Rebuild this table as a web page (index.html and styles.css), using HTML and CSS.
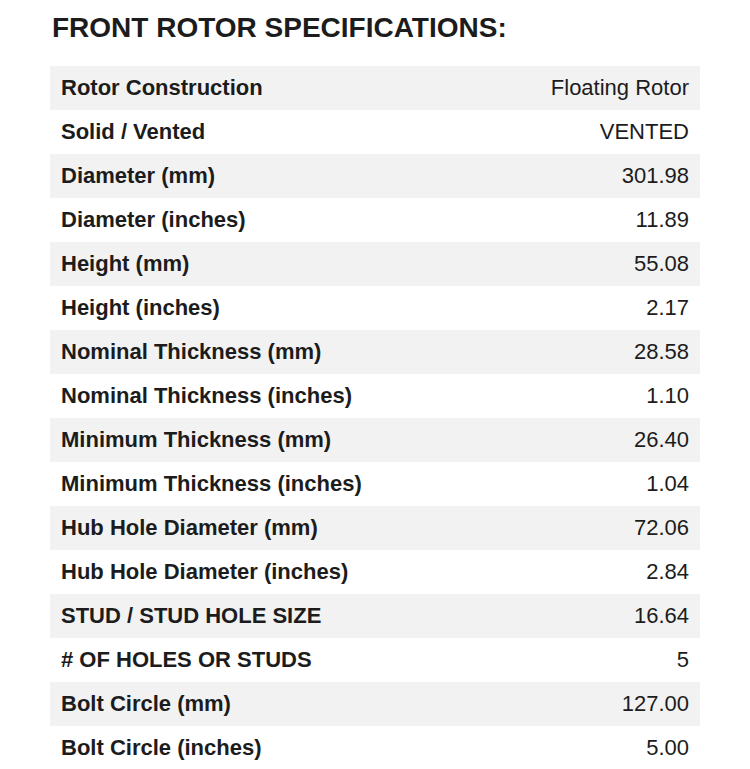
FILE: index.html
```html
<!DOCTYPE html>
<html>
<head>
<meta charset="utf-8">
<link rel="stylesheet" href="styles.css">
</head>
<body>
<div class="wrap">
  <h1 class="title">FRONT ROTOR SPECIFICATIONS:</h1>
  <table class="specs">
    <tr><th>Rotor Construction</th><td>Floating Rotor</td></tr>
    <tr><th>Solid / Vented</th><td>VENTED</td></tr>
    <tr><th>Diameter (mm)</th><td>301.98</td></tr>
    <tr><th>Diameter (inches)</th><td>11.89</td></tr>
    <tr><th>Height (mm)</th><td>55.08</td></tr>
    <tr><th>Height (inches)</th><td>2.17</td></tr>
    <tr><th>Nominal Thickness (mm)</th><td>28.58</td></tr>
    <tr><th>Nominal Thickness (inches)</th><td>1.10</td></tr>
    <tr><th>Minimum Thickness (mm)</th><td>26.40</td></tr>
    <tr><th>Minimum Thickness (inches)</th><td>1.04</td></tr>
    <tr><th>Hub Hole Diameter (mm)</th><td>72.06</td></tr>
    <tr><th>Hub Hole Diameter (inches)</th><td>2.84</td></tr>
    <tr><th>STUD / STUD HOLE SIZE</th><td>16.64</td></tr>
    <tr><th># OF HOLES OR STUDS</th><td>5</td></tr>
    <tr><th>Bolt Circle (mm)</th><td>127.00</td></tr>
    <tr><th>Bolt Circle (inches)</th><td>5.00</td></tr>
  </table>
</div>
</body>
</html>
```
FILE: styles.css
```css
html, body {
  margin: 0;
  padding: 0;
  background: #fff;
}
.wrap {
  padding: 12px 50px 0 50px;
  font-family: "Liberation Sans", Arial, sans-serif;
  color: #1c1c1c;
}
.title {
  margin: 0 0 22px 2px;
  font-size: 28px;
  line-height: 32px;
  font-weight: bold;
}
.specs {
  width: 650px;
  border-collapse: collapse;
  font-size: 22px;
}
.specs tr {
  height: 44px;
}
.specs tr:nth-child(odd) {
  background: #f2f2f2;
}
.specs th, .specs td {
  padding: 0 11px;
  height: 44px;
  vertical-align: middle;
}
.specs th {
  text-align: left;
  font-weight: bold;
}
.specs td {
  text-align: right;
  font-weight: normal;
}
```
